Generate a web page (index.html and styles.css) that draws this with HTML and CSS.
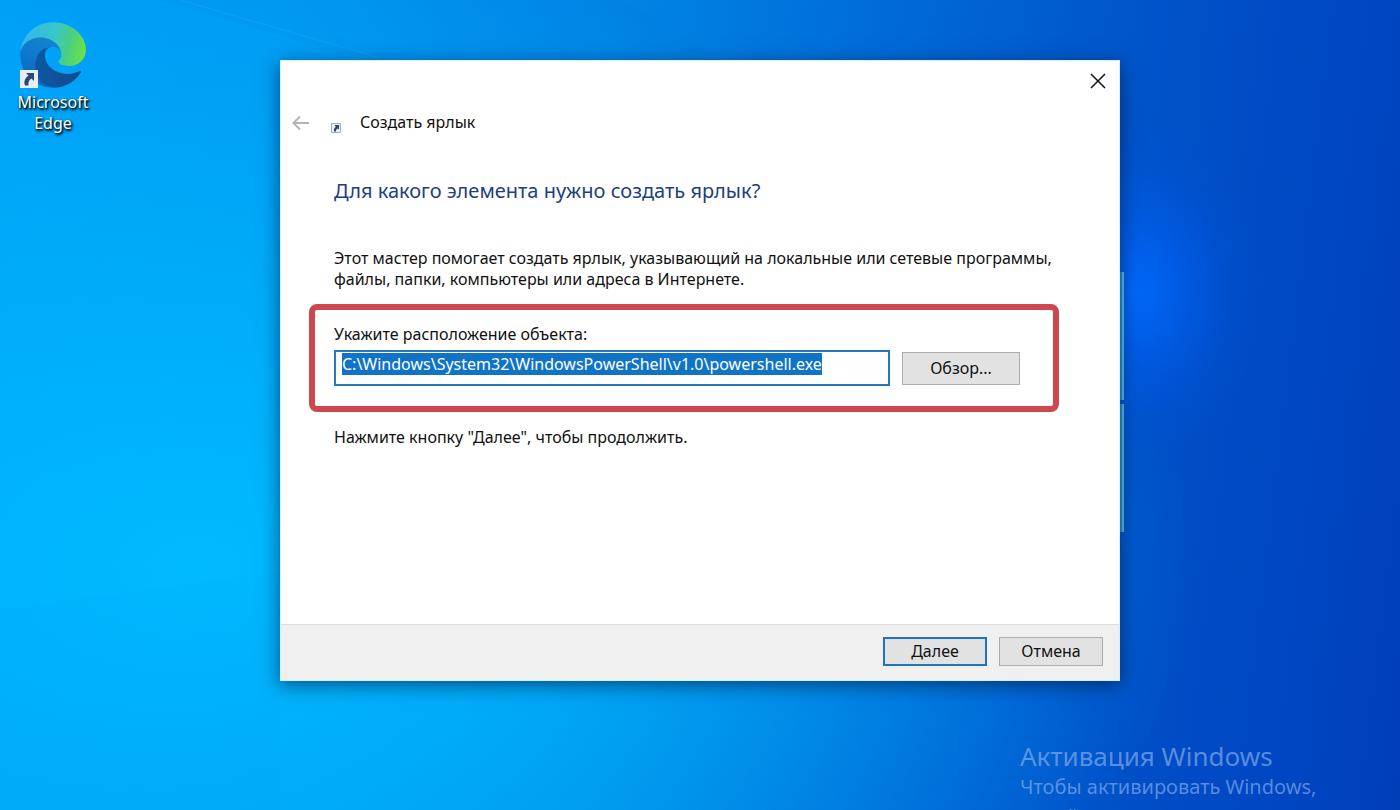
FILE: index.html
```html
<!DOCTYPE html>
<html lang="ru">
<head>
<meta charset="utf-8">
<title>Создать ярлык</title>
<link rel="stylesheet" href="styles.css">
</head>
<body>
<main class="desktop">
  <svg class="rays" viewBox="0 0 1400 810" preserveAspectRatio="none" aria-hidden="true">
    <path d="M160 0 400 70 1120 300 620 0Z" fill="#0060d0" opacity=".05"/>
    <path d="M0 610 280 572 280 810 0 810Z" fill="#0068d8" opacity=".02"/>
    <path d="M180 0 380 58" stroke="#6cc8ff" opacity=".15"/>
  </svg>

  <a class="shortcut" href="#edge">
    <span class="shortcut-icon">
      <svg class="edge-logo" viewBox="4 5 257 256" aria-hidden="true">
        <defs>
          <linearGradient id="deep" x1="63" y1="178" x2="242" y2="178" gradientUnits="userSpaceOnUse">
            <stop offset="0" stop-color="#0c59a4"/><stop offset="1" stop-color="#114a8b"/>
          </linearGradient>
          <linearGradient id="mid" x1="120" y1="60" x2="60" y2="240" gradientUnits="userSpaceOnUse">
            <stop offset="0" stop-color="#1585d0"/><stop offset=".5" stop-color="#0f78cc"/><stop offset="1" stop-color="#0a68c0"/>
          </linearGradient>
          <linearGradient id="wave" x1="20" y1="70" x2="250" y2="120" gradientUnits="userSpaceOnUse">
            <stop offset="0" stop-color="#35b8e8"/><stop offset=".45" stop-color="#36c6d0"/><stop offset=".75" stop-color="#48cf80"/><stop offset="1" stop-color="#6be048"/>
          </linearGradient>
        </defs>
        <path fill="url(#mid)" d="M110.34 246.34A79.2 79.2 0 0 1 87.6 225a80.72 80.72 0 0 1 29.53-120c3.12-1.47 8.45-4.13 15.54-4a32.35 32.35 0 0 1 25.69 13 31.88 31.88 0 0 1 6.36 18.66c0-.21 24.46-79.6-80-79.6-43.9 0-80 41.66-80 78.21a130.15 130.15 0 0 0 12.11 56 128 128 0 0 0 156.38 67.11 75.55 75.55 0 0 1-62.78-8z"/>
        <path fill="url(#deep)" d="M235.68 195.46a93.73 93.73 0 0 1-10.54 4.71 101.87 101.87 0 0 1-35.9 6.46c-47.32 0-88.54-32.55-88.54-74.32A31.48 31.48 0 0 1 117.13 105c-42.8 1.8-53.8 46.4-53.8 72.53 0 73.88 68.09 81.37 82.76 81.37 7.91 0 19.84-2.3 27-4.56l1.31-.44a128.34 128.34 0 0 0 66.6-52.8 4 4 0 0 0-5.32-5.64z"/>
        <path fill="url(#wave)" d="M156.94 153.78c-.81 1.05-3.3 2.5-3.3 5.66 0 2.61 1.7 5.12 4.72 7.23 14.38 10 41.49 8.68 41.56 8.68a59.56 59.56 0 0 0 30.27-8.35A61.38 61.38 0 0 0 260.63 114c.26-22.41-8-37.31-11.34-43.91C228.09 28.76 182.35 5 132.63 5A128 128 0 0 0 4.63 131.2c.48-36.54 36.8-66.05 80-66.05 3.5 0 23.46.34 42 10.07 16.34 8.58 24.9 18.94 30.85 29.21 6.18 10.67 7.28 24.15 7.28 29.52s-2.74 13.33-7.82 19.83z"/>
      </svg>
      <svg class="link-badge" viewBox="0 0 18 18" aria-hidden="true">
        <path d="M0 0H18V18H0Z" fill="#e8eef4"/>
        <path d="M6 3H14V11L11.500 8.500C9 10 8 12 8.500 15.500H5C3.500 11.500 5 8 8.500 5.500Z" fill="#274a74"/>
      </svg>
    </span>
    <span class="shortcut-name">Microsoft Edge</span>
  </a>

  <div class="window-light" aria-hidden="true"><span></span><span></span></div>

  <section class="dialog" role="dialog" aria-labelledby="dialog-title">
    <div class="caption">
      <button class="icon-button close" type="button" aria-label="Закрыть">
        <svg viewBox="0 0 16 16" width="16" height="16"><path d="M1 1 15 15M15 1 1 15" fill="none" stroke="#111" stroke-width="1.500"/></svg>
      </button>
    </div>
    <header class="title-row">
      <button class="icon-button" type="button" aria-label="Назад" disabled>
        <svg viewBox="0 0 18 16" width="18" height="16"><path d="M17 8H2M8 1.500 1.500 8 8 14.500" fill="none" stroke="#b4b4b4" stroke-width="2"/></svg>
      </button>
      <svg class="title-icon" viewBox="0 0 10 10" width="10" height="10" aria-hidden="true">
        <path d="M.5.5H9.500V9.500H.5Z" fill="#e8eef4" stroke="#a4b0bc"/>
        <path d="M3.500 2H8V6.500L6.500 5.500C5 6.500 5 7.500 5 8.500H3C2.500 6.500 3.500 5 4.800 3.800Z" fill="#2c4668"/>
      </svg>
      <span id="dialog-title">Создать ярлык</span>
    </header>

    <form class="wizard" onsubmit="return false">
      <div class="page">
        <h1>Для какого элемента нужно создать ярлык?</h1>
        <p class="intro">Этот мастер помогает создать ярлык, указывающий на локальные или сетевые программы, файлы, папки, компьютеры или адреса в Интернете.</p>
        <div class="location">
          <label for="path">Укажите расположение объекта:</label>
          <div class="location-row">
            <input id="path" type="text" spellcheck="false" value="C:\Windows\System32\WindowsPowerShell\v1.0\powershell.exe" autofocus>
            <button class="button browse" type="button">Обзор...</button>
          </div>
        </div>
        <p class="hint">Нажмите кнопку "Далее", чтобы продолжить.</p>
      </div>
      <footer class="actions">
        <button class="button primary" type="submit">Далее</button>
        <button class="button" type="button">Отмена</button>
      </footer>
    </form>
  </section>

  <aside class="watermark">
    <strong>Активация Windows</strong>
    <span>Чтобы активировать Windows, перейдите в раздел "Параметры".</span>
  </aside>
</main>
<script src="script.js"></script>
</body>
</html>
```
FILE: styles.css
```css
* { box-sizing: border-box; }

body {
  margin: 0;
  font-family: "Noto Sans", "Open Sans", sans-serif;
  font-size: 16px;
  line-height: 21px;
  color: #111;
}

.desktop {
  position: relative;
  height: 100vh;
  overflow: hidden;
  padding: 60px 20%;
  background:
    radial-gradient(ellipse 130px 170px at 81% 36%, rgba(0, 106, 255, .9), rgba(0, 100, 252, .4) 45%, rgba(0, 90, 240, .1) 75%, rgba(0, 90, 240, 0)),
    radial-gradient(ellipse 1000px 620px at 14% 70%, rgba(0, 186, 255, 1), rgba(0, 180, 252, .75) 40%, rgba(0, 160, 255, 0)),
    linear-gradient(97deg, #009ef6 0%, #0098f2 20%, #0084e4 42%, #0064d4 64%, #0050c8 80%, #0046c2 92%, #003eb8 100%);
}

.rays {
  position: absolute;
  inset: 0;
  width: 100%;
  height: 100%;
}

.shortcut {
  position: absolute;
  left: 8px;
  top: 22px;
  width: 90px;
  display: flex;
  flex-direction: column;
  align-items: center;
  gap: 4px;
  color: #fff;
  text-align: center;
  text-decoration: none;
  text-shadow: 1px 1px 2px #000, 1px 2px 3px rgba(0, 0, 0, .9);
}

.shortcut-icon { position: relative; width: 66px; height: 66px; }
.edge-logo { display: block; width: 100%; height: 100%; }
.link-badge { position: absolute; left: 0; bottom: 0; width: 18px; height: 18px; }

.window-light {
  position: absolute;
  right: 276px;
  top: 272px;
  width: 8px;
  display: flex;
  flex-direction: column;
  gap: 4px;
}
.window-light span { height: 128px; background: #2898d8; border-right: 2px solid #54c8f0; }

.dialog {
  position: relative;
  display: flex;
  flex-direction: column;
  background: #fff;
  border: 1px solid #d4f2ff;
  box-shadow: 0 4px 18px rgba(0, 20, 60, .6);
}

.caption { display: flex; justify-content: flex-end; padding: 12px 13px; }

.icon-button {
  display: flex;
  padding: 0;
  border: 0;
  background: none;
}

.title-row {
  display: flex;
  align-items: center;
  padding: 11px;
}
.title-icon { margin: 10px 19px 0 21px; }

.page { padding: 33px 53px 0; }

h1 {
  margin: 0;
  font-size: 20px;
  font-weight: 400;
  line-height: 28px;
  color: #1c3f80;
}

.intro { margin: 43px 0 14px; }

.location {
  margin: 0 7px 0 -25px;
  padding: 14px 33px 20px 19px;
  border: 6px solid #cc484e;
  border-radius: 8px;
}
.location label { display: block; margin-bottom: 5px; }
.location-row { display: flex; align-items: center; gap: 12px; }

.location input {
  flex: 1;
  min-width: 0;
  height: 36px;
  padding: 2px 6px 10px;
  border: 2px solid #2a78b8;
  outline: 0;
  font: inherit;
  line-height: 22px;
  color: #111;
}
.location input::selection { background: #0f74c8; color: #fff; }

.button {
  width: 104px;
  height: 29px;
  padding: 0;
  border: 1px solid #adadad;
  background: #e2e2e2;
  font: inherit;
  color: #111;
}
.button.browse { width: 118px; height: 33px; }
.button.primary { border: 2px solid #1c74bc; }

.hint { margin: 15px 0 176px; }

.actions {
  display: flex;
  justify-content: flex-end;
  gap: 12px;
  padding: 12px 16px 14px;
  border-top: 1px solid #dcdcdc;
  background: #f0f0f0;
}

.watermark {
  position: absolute;
  left: 1020px;
  top: 741px;
  width: 340px;
  display: flex;
  flex-direction: column;
  font-size: 20px;
  line-height: 30px;
  color: rgba(150, 185, 240, .6);
}
.watermark strong { font-size: 26px; font-weight: 400; line-height: 31px; }
```
FILE: script.js
```js
const pathInput = document.getElementById("path");
pathInput.focus();
pathInput.select();
```
